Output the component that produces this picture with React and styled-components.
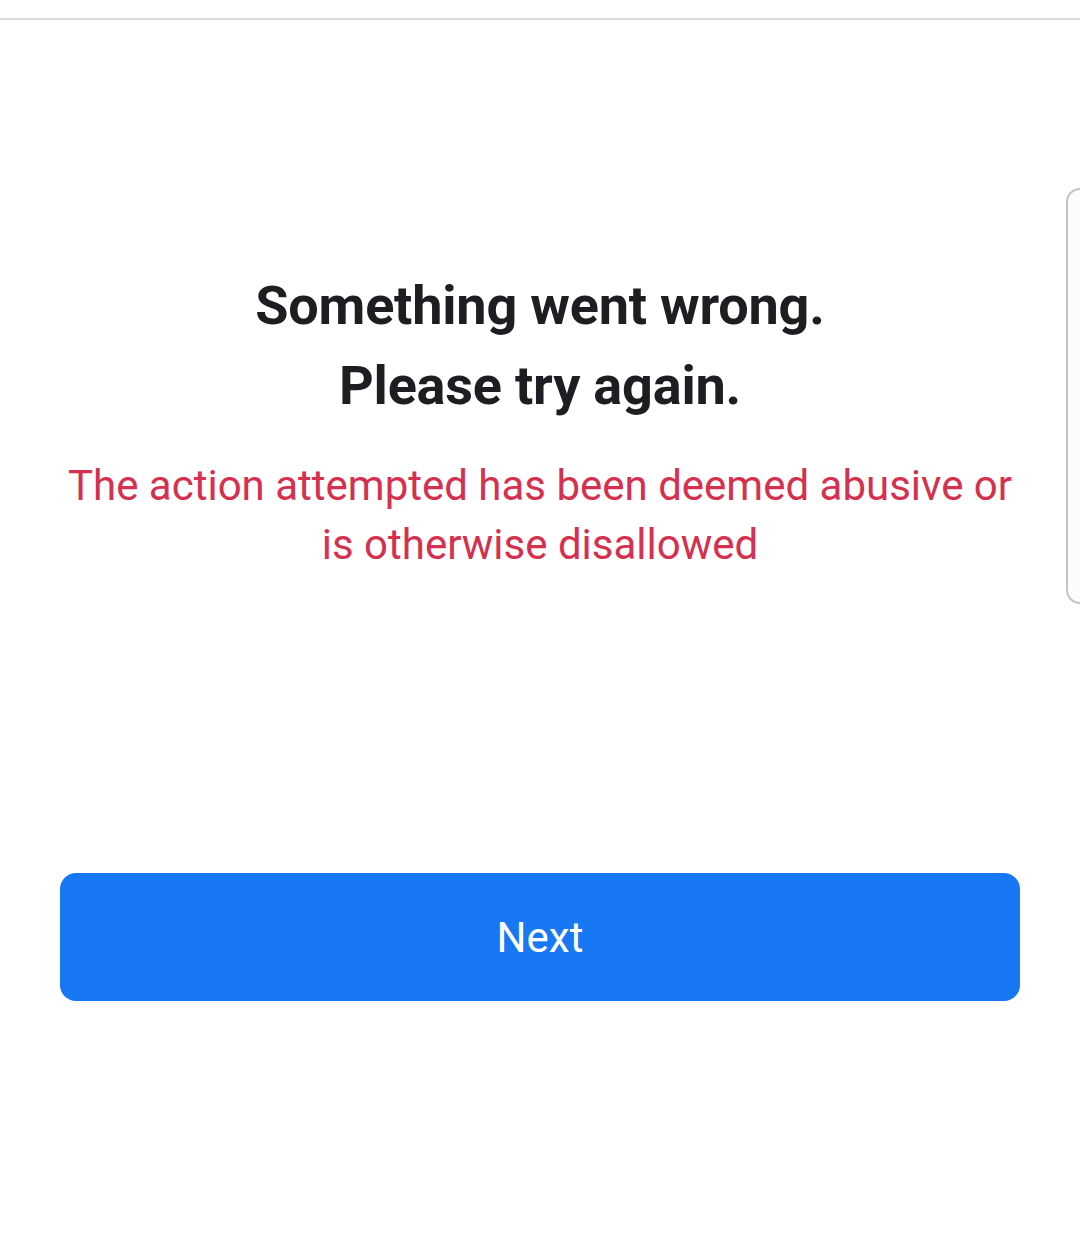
import React from "react";
import styled, { createGlobalStyle } from "styled-components";

const GlobalStyle = createGlobalStyle`
  html, body {
    margin: 0;
    padding: 0;
    background: #ffffff;
  }
  body {
    font-family: Roboto, "Liberation Sans", Arial, sans-serif;
    -webkit-font-smoothing: antialiased;
  }
`;

const Page = styled.div`
  position: relative;
  min-height: 1237px;
  overflow: hidden;
  display: flex;
  flex-direction: column;
  background: #ffffff;
`;

const TopRule = styled.div`
  margin-top: 18px;
  height: 2px;
  background: #dadada;
`;

const SidePanel = styled.div`
  position: absolute;
  top: 188px;
  left: 1066px;
  width: 60px;
  height: 416px;
  box-sizing: border-box;
  border: 2px solid #c4c4c4;
  border-radius: 14px;
  background: #fcfcfc;
`;

const Content = styled.main`
  display: flex;
  flex-direction: column;
  align-items: center;
  padding: 246px 60px 0;
`;

const Heading = styled.h1`
  margin: 0;
  font-size: 54px;
  font-weight: 700;
  line-height: 80px;
  color: #1c1e21;
  text-align: center;
  letter-spacing: -0.2px;
`;

const ErrorText = styled.p`
  margin: 30px 0 0;
  max-width: 960px;
  font-size: 42px;
  font-weight: 400;
  line-height: 59px;
  color: #d5304f;
  text-align: center;
`;

const NextButton = styled.button`
  margin-top: 299px;
  align-self: stretch;
  height: 128px;
  border: 0;
  border-radius: 16px;
  background: #1877f2;
  color: #ffffff;
  font-family: inherit;
  font-size: 42px;
  font-weight: 400;
  cursor: pointer;
`;

export default function App() {
  return (
    <>
      <GlobalStyle />
      <Page>
        <TopRule />
        <SidePanel />
        <Content>
          <Heading>
            Something went wrong.
            <br />
            Please try again.
          </Heading>
          <ErrorText>
            The action attempted has been deemed abusive or is otherwise
            disallowed
          </ErrorText>
          <NextButton>Next</NextButton>
        </Content>
      </Page>
    </>
  );
}
